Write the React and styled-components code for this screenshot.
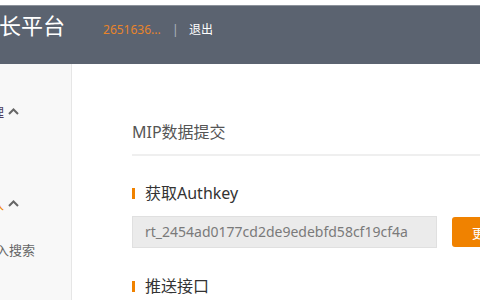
import styled, { createGlobalStyle } from 'styled-components'

const GlobalStyle = createGlobalStyle`
    html, body {
        margin: 0;
        padding: 0;
        background: #ffffff;
        font-family: "Noto Sans", "Noto Sans CJK SC", sans-serif;
    }
    #root {
        width: 480px;
        height: 300px;
        overflow: hidden;
    }
`

const colors = {
    header: '#5b6370',
    orange: '#f08200',
    sidebar: '#f8f8f8',
}

function Chevron() {
    return (
        <svg width="11" height="7" viewBox="0 0 11 7">
            <path d="M1 6 L5.5 1.5 L10 6" fill="none" stroke="#666" strokeWidth="2" />
        </svg>
    )
}

export default function App() {
    return (
        <Page>
            <GlobalStyle />
            <Header>
                <Logo>站长平台</Logo>
                <UserName>2651636...</UserName>
                <Divider>|</Divider>
                <Logout>退出</Logout>
            </Header>
            <Body>
                <Sidebar>
                    <Nav>
                        <NavTitle $top={37} $color="#4d3d5e">
                            网站管理 <Chevron />
                        </NavTitle>
                        <NavTitle $top={72} $color={colors.orange}>
                            数据引入 <Chevron />
                        </NavTitle>
                        <NavItem>MIP引入搜索</NavItem>
                    </Nav>
                </Sidebar>
                <Main>
                    <PageTitle>MIP数据提交</PageTitle>
                    <SectionTitle $top={27}>获取Authkey</SectionTitle>
                    <KeyRow>
                        <KeyInput>rt_2454ad0177cd2de9edebfd58cf19cf4a</KeyInput>
                        <OrangeButton>更换</OrangeButton>
                    </KeyRow>
                    <SectionTitle $top={28}>推送接口</SectionTitle>
                </Main>
            </Body>
        </Page>
    )
}

const Page = styled.div`
    display: flex;
    flex-direction: column;
    padding-top: 5px;
    height: 295px;
`
const Header = styled.header`
    display: flex;
    align-items: baseline;
    height: 54px;
    padding-top: 4px;
    background: ${colors.header};
    border-top: 1px solid #8c929b;
    flex-shrink: 0;
`
const Logo = styled.div`
    margin-left: -23px;
    font-size: 22px;
    line-height: 30px;
    color: #ffffff;
    white-space: nowrap;
`
const UserName = styled.span`
    margin-left: 38px;
    font-size: 12px;
    color: #e8842a;
`
const Divider = styled.span`
    margin-left: 11px;
    font-size: 13px;
    color: #a9b0ba;
`
const Logout = styled.span`
    margin-left: 10px;
    font-size: 12px;
    color: #ffffff;
`
const Body = styled.div`
    display: flex;
    flex: 1;
`
const Sidebar = styled.aside`
    width: 71px;
    flex-shrink: 0;
    background: ${colors.sidebar};
    border-right: 1px solid #e6e6e6;
    overflow: hidden;
`
const Nav = styled.nav`
    display: flex;
    flex-direction: column;
    margin-left: -48px;
    width: 140px;
`
const NavTitle = styled.div`
    display: flex;
    align-items: center;
    gap: 4px;
    margin-top: ${(p) => p.$top}px;
    height: 20px;
    font-size: 13px;
    color: ${(p) => p.$color};
    white-space: nowrap;
`
const NavItem = styled.div`
    margin-top: 27px;
    padding-left: 7px;
    font-size: 13px;
    line-height: 20px;
    color: #666;
    white-space: nowrap;
`
const Main = styled.main`
    flex: 1;
    padding: 58px 0 0 60px;
    overflow: hidden;
`
const PageTitle = styled.h2`
    margin: 0;
    padding-bottom: 12px;
    font-size: 16px;
    font-weight: normal;
    line-height: 20px;
    color: #555;
    border-bottom: 2px solid #efefef;
`
const SectionTitle = styled.h3`
    display: flex;
    align-items: center;
    margin: ${(p) => p.$top}px 0 0;
    font-size: 16px;
    font-weight: normal;
    line-height: 20px;
    color: #333;
    &::before {
        content: '';
        width: 3px;
        height: 11px;
        margin-right: 10px;
        background: ${colors.orange};
    }
`
const KeyRow = styled.div`
    display: flex;
    align-items: center;
    gap: 15px;
    margin-top: 13px;
`
const KeyInput = styled.div`
    width: 280px;
    height: 30px;
    flex-shrink: 0;
    padding-left: 12px;
    padding-right: 11px;
    background: #ebebeb;
    border: 1px solid #e0e0e0;
    font-size: 14px;
    line-height: 30px;
    color: #7a7a7a;
    white-space: nowrap;
    overflow: hidden;
`
const OrangeButton = styled.button`
    flex-shrink: 0;
    height: 30px;
    padding: 0 20px;
    border: none;
    border-radius: 3px;
    background: ${colors.orange};
    font-family: inherit;
    font-size: 13px;
    color: #fff;
`
